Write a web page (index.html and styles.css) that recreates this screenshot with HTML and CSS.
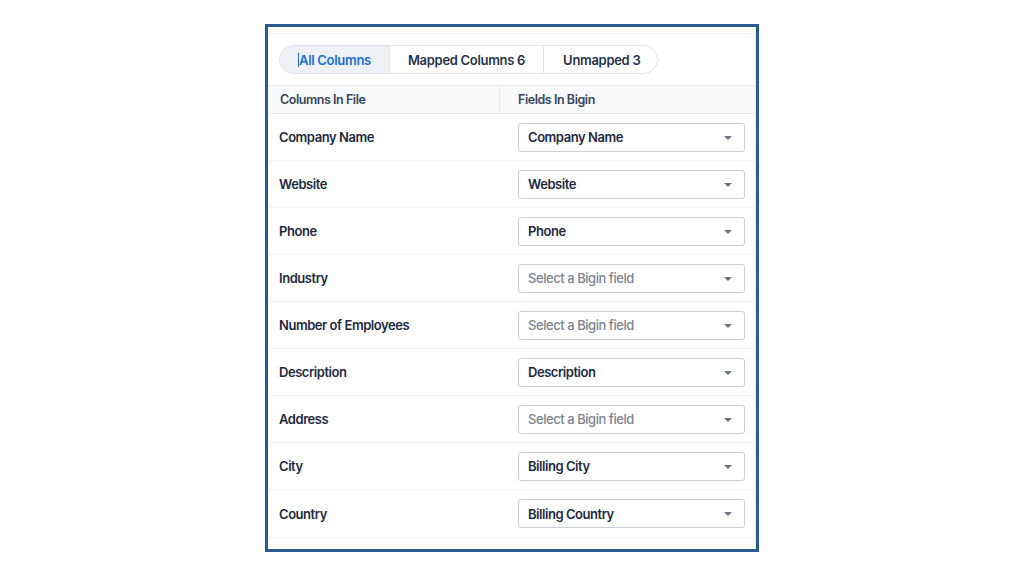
FILE: index.html
```html
<!DOCTYPE html>
<html>
<head>
<meta charset="utf-8">
<link rel="stylesheet" href="styles.css">
</head>
<body>
<div class="frame">
  <div class="panel">
    <div class="topline"></div>
    <div class="tabs-wrap">
      <div class="tabs">
        <div class="tab active"><span class="caret-bar"></span>All Columns</div>
        <div class="tab">Mapped Columns 6</div>
        <div class="tab">Unmapped 3</div>
      </div>
    </div>
    <div class="head">
      <div class="hcell left">Columns In File</div>
      <div class="hcell right">Fields In Bigin</div>
    </div>
    <div class="row"><div class="label">Company Name</div><div class="field"><div class="select">Company Name<span class="arrow"></span></div></div></div>
    <div class="row"><div class="label">Website</div><div class="field"><div class="select">Website<span class="arrow"></span></div></div></div>
    <div class="row"><div class="label">Phone</div><div class="field"><div class="select">Phone<span class="arrow"></span></div></div></div>
    <div class="row"><div class="label">Industry</div><div class="field"><div class="select empty">Select a Bigin field<span class="arrow"></span></div></div></div>
    <div class="row"><div class="label">Number of Employees</div><div class="field"><div class="select empty">Select a Bigin field<span class="arrow"></span></div></div></div>
    <div class="row"><div class="label">Description</div><div class="field"><div class="select">Description<span class="arrow"></span></div></div></div>
    <div class="row"><div class="label">Address</div><div class="field"><div class="select empty">Select a Bigin field<span class="arrow"></span></div></div></div>
    <div class="row"><div class="label">City</div><div class="field"><div class="select">Billing City<span class="arrow"></span></div></div></div>
    <div class="row last"><div class="label">Country</div><div class="field"><div class="select">Billing Country<span class="arrow"></span></div></div></div>
  </div>
</div>
</body>
</html>
```
FILE: styles.css
```css
* { box-sizing: border-box; }
html, body { margin: 0; padding: 0; background: #ffffff; }
body {
  width: 1024px;
  height: 576px;
  overflow: hidden;
  font-family: Inter, "Noto Sans", sans-serif;
  color: #1e2a40;
}
.frame {
  margin-left: 265px;
  margin-top: 24px;
  width: 494px;
  height: 528px;
  border: 3px solid #2c5a8c;
  background: #fff;
  overflow: hidden;
}
.panel {
  width: 488px;
  height: 100%;
  border-right: 1px solid #e9ecf0;
}
.topline {
  height: 7px;
  border-bottom: 1px solid #eef0f3;
}
.tabs-wrap {
  padding: 11px 0 11px 11px;
}
.tabs {
  display: inline-flex;
  height: 29px;
  border: 1px solid #dfe3e9;
  border-radius: 15px;
  overflow: hidden;
  background: #fff;
}
.tab {
  display: flex;
  align-items: center;
  font-size: 13px;
  font-weight: 600;
  letter-spacing: -0.3px;
  color: #26334a;
  padding: 0 17px;
  border-left: 1px solid #e3e7ec;
}
.tab:first-child { border-left: none; padding-left: 18px; padding-right: 18px; }
.tab.active {
  background: #edf1f5;
  color: #1b6fd6;
}
.caret-bar {
  display: inline-block;
  width: 1px;
  height: 14px;
  background: #1b6fd6;
  margin-right: 0;
}
.tab:nth-child(2) { padding: 0 18px; }
.tab:nth-child(3) { padding: 0 17px 0 19px; }
.head {
  display: flex;
  height: 29px;
  border-top: 1px solid #e6e9ee;
  border-bottom: 1px solid #e6e9ee;
  background: #f9fafc;
}
.hcell {
  display: flex;
  align-items: center;
  font-size: 12.5px;
  font-weight: 600;
  letter-spacing: -0.45px;
  color: #37445a;
}
.hcell.left {
  width: 232px;
  padding-left: 12px;
  border-right: 1px solid #e6e9ee;
}
.hcell.right { padding-left: 18px; }
.row {
  display: flex;
  align-items: center;
  height: 47px;
  border-bottom: 1px solid #eff1f4;
}
.row.last { height: 48px; }
.label {
  width: 232px;
  padding-left: 11px;
  font-size: 13px;
  font-weight: 600;
  letter-spacing: -0.45px;
  color: #1e2a40;
}
.field { padding-left: 18px; }
.select {
  position: relative;
  width: 227px;
  height: 29px;
  border: 1px solid #c9cfd7;
  border-radius: 3px;
  display: flex;
  align-items: center;
  padding-left: 9px;
  font-size: 13px;
  font-weight: 600;
  letter-spacing: -0.45px;
  color: #1e2a40;
}
.select.empty { color: #7b8491; font-weight: 500; }
.arrow {
  position: absolute;
  right: 12px;
  top: 12px;
  width: 0;
  height: 0;
  border-left: 4px solid transparent;
  border-right: 4px solid transparent;
  border-top: 4px solid #6c7380;
}
```
